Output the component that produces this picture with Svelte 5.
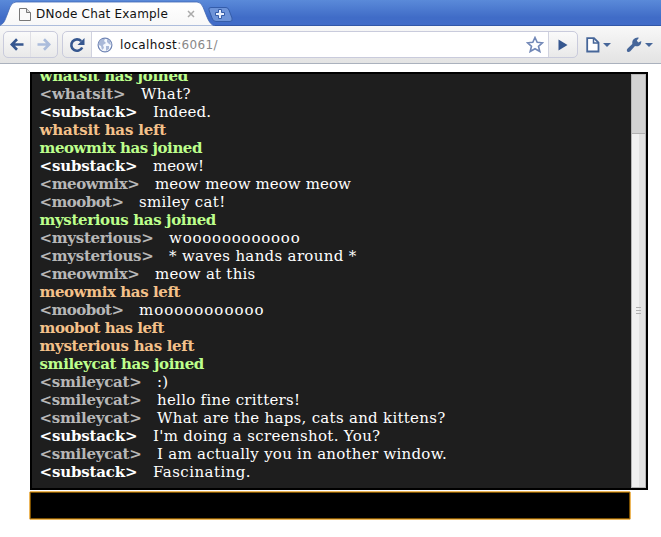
<script>
  const nameWidths = { whatsit: 86, substack: 98, meowmix: 100, moobot: 84, mysterious: 114, smileycat: 102 };

  const lines = [
    { event: 'whatsit has joined', kind: 'joined', width: 148.5 },
    { name: 'whatsit', text: 'What?', width: 50 },
    { name: 'substack', text: 'Indeed.', width: 58, me: true },
    { event: 'whatsit has left', kind: 'left', width: 126.5 },
    { event: 'meowmix has joined', kind: 'joined', width: 162.5 },
    { name: 'substack', text: 'meow!', width: 51, me: true },
    { name: 'meowmix', text: 'meow meow meow meow', width: 196 },
    { name: 'moobot', text: 'smiley cat!', width: 86.5 },
    { event: 'mysterious has joined', kind: 'joined', width: 176.5 },
    { name: 'mysterious', text: 'woooooooooooo', width: 131.5 },
    { name: 'mysterious', text: '* waves hands around *', width: 187.5 },
    { name: 'meowmix', text: 'meow at this', width: 100.5 },
    { event: 'meowmix has left', kind: 'left', width: 140.5 },
    { name: 'moobot', text: 'mooooooooooo', width: 125.5 },
    { event: 'moobot has left', kind: 'left', width: 124.5 },
    { event: 'mysterious has left', kind: 'left', width: 154.5 },
    { event: 'smileycat has joined', kind: 'joined', width: 164.5 },
    { name: 'smileycat', text: ':)', width: 11.5 },
    { name: 'smileycat', text: 'hello fine critters!', width: 143 },
    { name: 'smileycat', text: 'What are the haps, cats and kittens?', width: 288.5 },
    { name: 'substack', text: "I'm doing a screenshot. You?", width: 227.5, me: true },
    { name: 'smileycat', text: 'I am actually you in another window.', width: 290 },
    { name: 'substack', text: 'Fascinating.', width: 98, me: true }
  ];

  // Spreads the letters of a text run evenly over the given width.
  function fit(node, width) {
    const natural = node.getBoundingClientRect().width;
    node.style.letterSpacing = `${(width - natural) / node.textContent.length}px`;
  }
</script>

<div class="window">
  <header class="tabs">
    <svg class="tabshape" width="240" height="26" viewBox="0 0 240 26">
      <defs>
        <linearGradient id="tab" x2="0" y2="1"><stop stop-color="#fff" /><stop offset="1" stop-color="#f7f7f7" /></linearGradient>
      </defs>
      <path d="M0 26V25C4 24 5 20 7 15L10 7Q12 2 16 2H197Q201 2 203 7L207 17Q210 25 215 26Z" fill="url(#tab)" stroke="#3d64b3" stroke-width=".8" />
      <path d="M211 7.500H226Q228 7.500 229 10L232 18Q233 21.500 230 21.500H216Q213 21.500 212 18L209 10Q208 7.500 211 7.500Z" fill="#6d93d8" stroke="#345ca9" />
      <path d="M218.500 9.500h3v3h3v3h-3v3h-3v-3h-3v-3h3z" fill="#e7eefb" stroke="#345ca9" />
    </svg>
    <div class="tab">
      <svg width="13" height="15" viewBox="0 0 13 15"><path d="M.5 1.500h7l4 4v8H.5z" fill="#fafafa" stroke="#777" /><path d="M7.500 1.500v4h4" fill="#ddd" stroke="#777" /></svg>
      <span class="title"><span use:fit={132}>DNode Chat Example</span></span>
      <svg class="close" width="8" height="8" viewBox="0 0 8 8"><path d="M1 1l6 6M7 1l-6 6" stroke="#aaa" stroke-width="1.500" /></svg>
    </div>
  </header>

  <nav class="toolbar">
    <div class="group history">
      <span class="half"><svg width="14" height="13" viewBox="0 0 14 13"><path d="M13.500 6.500H2M7 1.300L1.800 6.500L7 11.700" fill="none" stroke="#36578f" stroke-width="2.700" /></svg></span>
      <span class="half next"><svg width="14" height="13" viewBox="0 0 14 13"><path d="M.5 6.500H12M7 1.300L12.200 6.500L7 11.700" fill="none" stroke="#abbcdb" stroke-width="2.700" /></svg></span>
    </div>
    <div class="group location">
      <span class="reload"><svg width="16" height="16" viewBox="0 0 16 16"><path d="M12.200 4.200A5.700 5.700 0 1 0 13.200 10.500" fill="none" stroke="#36578f" stroke-width="2.600" /><path d="M15.500 1v7h-7z" fill="#36578f" /></svg></span>
      <div class="address">
        <svg width="16" height="16" viewBox="0 0 16 16"><circle cx="8" cy="8" r="6.900" fill="#f5f8fd" stroke="#7186b5" stroke-width="1.200" /><path d="M2 5L5 2L8 2L7 4L9 6L6 8L7 11L5 13L4 9L2 8ZM10 2L13 4L14 8L12 7L10 5ZM9 9L12 9L12 12L9 14Z" fill="#aab9d8" /></svg>
        <span class="url" use:fit={98}>localhost<i>:6061/</i></span>
        <svg class="star" width="18" height="17" viewBox="0 0 18 17"><path d="M9 1.500L11.200 6.300L16.500 6.800L12.500 10.300L13.800 15.500L9 12.700L4.200 15.500L5.500 10.300L1.500 6.800L6.800 6.300Z" fill="#fff" stroke="#7288b7" stroke-width="1.600" /></svg>
      </div>
      <span class="go"><svg width="10" height="12" viewBox="0 0 10 12"><path d="M.5.5L9.500 6L.5 11.500z" fill="#36578f" /></svg></span>
    </div>
    <span class="menu page">
      <svg width="14" height="16" viewBox="0 0 14 16"><path d="M1.200 1.200H8L12.500 5.700V14.500H1.200Z" fill="#fff" stroke="#466699" stroke-width="1.800" /><path d="M7.500 1.500V6H12" fill="none" stroke="#466699" stroke-width="1.500" /></svg>
      <b class="caret"></b>
    </span>
    <span class="menu tools">
      <svg width="17" height="16" viewBox="0 0 17 16"><path d="M9.500 1Q11.500 0 13 .8L10.800 3.500L12.200 5.500L15.300 4Q15.300 8.500 12 9.200Q10.500 9.500 9 9L4.300 14.200Q2.700 15.700 1.200 14.500Q.1 13 1.600 11.500L6.300 7Q5.700 2.700 9.500 1Z" fill="#466699" /></svg>
      <b class="caret"></b>
    </span>
  </nav>

  <main>
    <section class="chat">
      <div class="lines">
        {#each lines as line}
          {#if line.event}
            <p class={line.kind}><span use:fit={line.width}>{line.event}</span></p>
          {:else}
            <p><strong class:me={line.me} use:fit={nameWidths[line.name]}>&lt;{line.name}&gt;</strong><span use:fit={line.width}>{line.text}</span></p>
          {/if}
        {/each}
      </div>
      <div class="scroll"><div class="thumb"><i></i><i></i><i></i></div></div>
    </section>
    <div class="entry"></div>
  </main>
</div>

<style>
  .window { width: 661px; height: 537px; overflow: hidden; background: #fff; }
  svg { display: block; flex: none; }
  .tabs { position: relative; height: 26px; box-sizing: border-box; border-bottom: 1px solid #3257a7; background: linear-gradient(#5a8ad9, #406cc7 70%, #416cc8); }
  .tabshape { position: absolute; left: 0; top: 0; }
  .tab { position: relative; display: flex; align-items: center; height: 26px; padding: 2px 0 0 19px; box-sizing: border-box; }
  .title { width: 150px; margin-left: 4px; font: 12px/16px "DejaVu Sans", sans-serif; white-space: nowrap; color: #111; }
  .close { margin-left: 1px; }
  .toolbar { display: flex; align-items: flex-start; height: 38px; padding: 5px 0 0 3px; box-sizing: border-box; border-bottom: 1px solid #aab1bd; background: linear-gradient(#f8f8f8, #e3e3e3); }
  .group { display: flex; height: 27px; box-sizing: border-box; border: 1px solid #c9cbdc; border-radius: 5px; overflow: hidden; background: linear-gradient(#fafafa, #e9e9e9); }
  .history { width: 55px; }
  .half { width: 27px; display: grid; place-items: center; box-sizing: border-box; }
  .next { border-left: 1px solid #dfdfe5; }
  .location { width: 516px; margin-left: 4px; }
  .reload { width: 28px; display: grid; place-items: center; }
  .address { flex: 1; display: flex; align-items: center; padding: 0 4px 0 5px; border: solid #d0d2df; border-width: 0 1px; background: #fff; }
  .url { margin-left: 7px; font: 12px/16px "DejaVu Sans", sans-serif; color: #111; }
  .url i { font-style: normal; color: #888; }
  .star { margin-left: auto; }
  .go { width: 28px; display: grid; place-items: center; }
  .menu { display: flex; align-items: center; height: 27px; }
  .page { margin-left: 8px; }
  .tools { margin-left: 15px; }
  .caret { margin-left: 3px; border: 4px solid transparent; border-top-color: #466699; border-bottom: 0; }
  .tools .caret { margin-left: 2px; }
  main { padding: 8px 0 0 30px; }
  .chat { display: flex; width: 618px; height: 418px; box-sizing: border-box; border: 2px solid #000; background: #1e1e1e; }
  .lines { flex: 1; display: flex; flex-direction: column; justify-content: flex-end; padding: 0 0 7px 7.500px; overflow: hidden; font: 15px/18px "DejaVu Serif", serif; color: #fff; }
  p { flex: none; height: 18px; margin: 0; white-space: pre; }
  .joined { font-weight: bold; color: #bdff8c; }
  .left { font-weight: bold; color: #f4c18a; }
  strong { margin-right: 15.500px; color: #b7b7b7; }
  .me { color: #fff; }
  .scroll { width: 15px; box-sizing: border-box; padding-top: 58px; border: 1px solid #b5b5b5; background: #d2d2d2; }
  .thumb { height: 100%; display: flex; flex-direction: column; justify-content: center; align-items: center; gap: 2px; box-sizing: border-box; border-top: 1px solid #b0b0b0; background: linear-gradient(90deg, #f0f0f0 53%, #e2e2e2 53%); }
  .thumb i { width: 5px; height: 1px; background: #b0b0b0; }
  .entry { width: 602px; height: 29px; margin: 1px 0 0 -1px; box-sizing: border-box; border: 1px solid #edb75b; border-radius: 2px; background: #000; box-shadow: inset 0 0 0 1px #7c5000; }
</style>
